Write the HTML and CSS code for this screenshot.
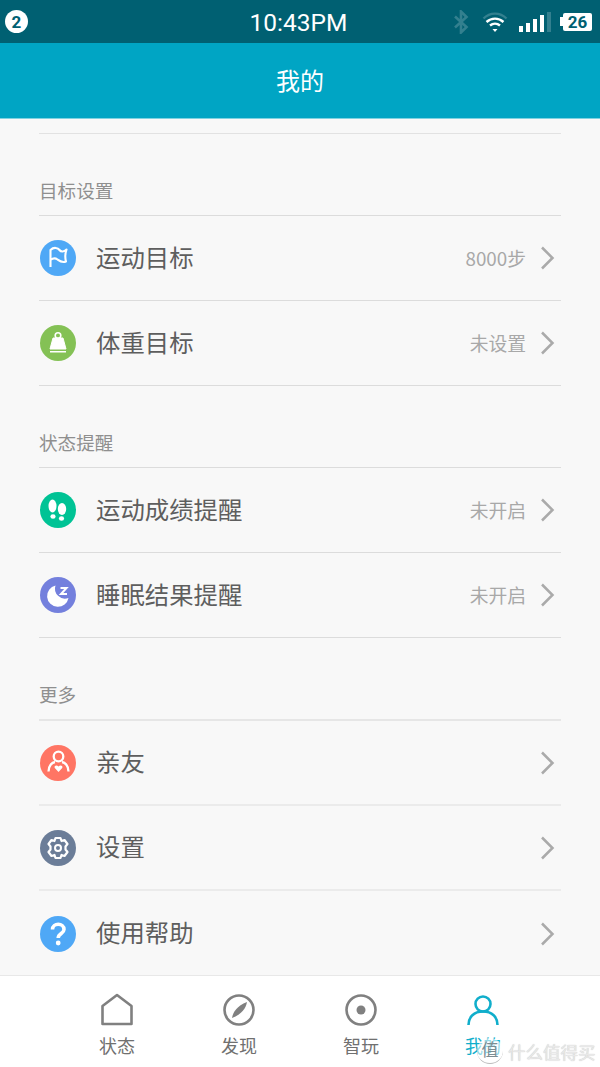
FILE: index.html
```html
<!DOCTYPE html>
<html lang="zh-CN">
<head>
  <meta charset="UTF-8" />
  <meta name="viewport" content="width=device-width, initial-scale=1.0" />
  <title>我的</title>
  <link rel="stylesheet" href="styles.css">
</head>
<body>
  <div class="phone">
    <div class="status-bar">
      <div class="status-left"><span class="sim-badge">2</span></div>
      <div class="status-time">10:43PM</div>
      <div class="status-right">
        <svg class="ic-bt" width="20" height="24" viewBox="0 0 20 24"><path d="M4 6.5 L15.5 17 L10 22.5 V1.5 L15.5 7 L4 17.5" fill="none" stroke="#33808f" stroke-width="2.6"/></svg>
        <svg class="ic-wifi" width="26" height="22" viewBox="0 0 26 22">
          <path d="M1.5 7.5 C8 1 18 1 24.5 7.5" fill="none" stroke="#33808f" stroke-width="2.4"/>
          <path d="M4.5 11 C9.5 6.5 16.5 6.5 21.5 11" fill="none" stroke="#fff" stroke-width="2.4"/>
          <path d="M8 14.5 C11 12 15 12 18 14.5" fill="none" stroke="#fff" stroke-width="2.4"/>
          <path d="M10.5 18 L15.5 18 L13 21 Z" fill="#fff"/>
        </svg>
        <svg class="ic-signal" width="32" height="22" viewBox="0 0 32 22">
          <rect x="0" y="15" width="4" height="6" fill="#fff"/>
          <rect x="7" y="12" width="4" height="9" fill="#fff"/>
          <rect x="14" y="8" width="4" height="13" fill="#fff"/>
          <rect x="21" y="4" width="4" height="17" fill="#fff"/>
          <rect x="28" y="1" width="4" height="20" fill="#33808f"/>
        </svg>
        <div class="battery"><span class="battery-cap"></span><span class="battery-level">26</span></div>
      </div>
    </div>
    <div class="title-bar"><span class="title-text">我的</span></div>

    <div class="content">
      <div class="top-line"></div>

      <div class="section-title">目标设置</div>
      <div class="row">
        <span class="row-icon blue">
          <svg width="36" height="36" viewBox="0 0 36 36"><path d="M10.5 27 V10 C14 6.5 18 8 19.5 10 C21 12 24 12 26.5 9.5 C25 14 25 18 26 21.5 C22 23 19.5 21 17.5 19.5 C15.5 18 13 18 10.5 20" fill="none" stroke="#fff" stroke-width="2.1" stroke-linejoin="round"/></svg>
        </span>
        <span class="row-label">运动目标</span>
        <span class="row-value">8000步</span>
        <svg class="chevron" width="14" height="24" viewBox="0 0 14 24"><path d="M1 1.5 L11.5 12 L1 22.5" fill="none" stroke="#aaa" stroke-width="2.5"/></svg>
      </div>
      <div class="row">
        <span class="row-icon green">
          <svg width="36" height="36" viewBox="0 0 36 36">
            <circle cx="18" cy="10.5" r="2.8" fill="none" stroke="#fff" stroke-width="1.6"/>
            <path d="M13 13 H23 L26 24 H10 Z" fill="#fff" stroke="#fff" stroke-linejoin="round"/>
            <rect x="10" y="26" width="16" height="1.5" fill="#fff"/>
          </svg>
        </span>
        <span class="row-label">体重目标</span>
        <span class="row-value">未设置</span>
        <svg class="chevron" width="14" height="24" viewBox="0 0 14 24"><path d="M1 1.5 L11.5 12 L1 22.5" fill="none" stroke="#aaa" stroke-width="2.5"/></svg>
      </div>

      <div class="section-title">状态提醒</div>
      <div class="row">
        <span class="row-icon teal">
          <svg width="36" height="36" viewBox="0 0 36 36" fill="#fff">
            <ellipse cx="12.5" cy="14" rx="4" ry="6.5"/>
            <ellipse cx="13" cy="24.5" rx="2.6" ry="2.2"/>
            <ellipse cx="22" cy="17" rx="4.2" ry="6"/>
            <ellipse cx="21.5" cy="26.5" rx="2.6" ry="2.2"/>
          </svg>
        </span>
        <span class="row-label">运动成绩提醒</span>
        <span class="row-value">未开启</span>
        <svg class="chevron" width="14" height="24" viewBox="0 0 14 24"><path d="M1 1.5 L11.5 12 L1 22.5" fill="none" stroke="#aaa" stroke-width="2.5"/></svg>
      </div>
      <div class="row">
        <span class="row-icon purple">
          <svg width="36" height="36" viewBox="0 0 36 36">
            <path d="M15.5 8.5 A10.8 10.8 0 1 0 28.5 21 A10 10 0 0 1 15.5 8.5 Z" fill="#fff"/>
            <path d="M20.5 11 H26.5 L21 17 H27" fill="none" stroke="#fff" stroke-width="2"/>
          </svg>
        </span>
        <span class="row-label">睡眠结果提醒</span>
        <span class="row-value">未开启</span>
        <svg class="chevron" width="14" height="24" viewBox="0 0 14 24"><path d="M1 1.5 L11.5 12 L1 22.5" fill="none" stroke="#aaa" stroke-width="2.5"/></svg>
      </div>

      <div class="section-title tall">更多</div>
      <div class="row soft">
        <span class="row-icon coral">
          <svg width="36" height="36" viewBox="0 0 36 36">
            <circle cx="18.5" cy="11.5" r="4.8" fill="none" stroke="#fff" stroke-width="2.3"/>
            <path d="M8.5 26.5 C8.5 20.5 12 17.5 15 17 M28.5 26.5 C28.5 20.5 25 17.5 22 17" fill="none" stroke="#fff" stroke-width="2.3"/>
            <path d="M18.5 27 L14.8 23 C13.6 21 16.6 19.4 18.5 21.6 C20.4 19.4 23.4 21 22.2 23 Z" fill="#fff"/>
          </svg>
        </span>
        <span class="row-label">亲友</span>
        <svg class="chevron" width="14" height="24" viewBox="0 0 14 24"><path d="M1 1.5 L11.5 12 L1 22.5" fill="none" stroke="#aaa" stroke-width="2.5"/></svg>
      </div>
      <div class="row soft">
        <span class="row-icon slate">
          <svg width="36" height="36" viewBox="0 0 36 36">
            <path d="M15.5 8 H20.5 L21.5 11 L24.5 10 L27.5 14 L25.5 16.5 V19.5 L27.5 22 L24.5 26 L21.5 25 L20.5 28 H15.5 L14.5 25 L11.5 26 L8.5 22 L10.5 19.5 V16.5 L8.5 14 L11.5 10 L14.5 11 Z" fill="none" stroke="#fff" stroke-width="2.2" stroke-linejoin="round"/>
            <circle cx="18" cy="18" r="3" fill="none" stroke="#fff" stroke-width="2"/>
          </svg>
        </span>
        <span class="row-label">设置</span>
        <svg class="chevron" width="14" height="24" viewBox="0 0 14 24"><path d="M1 1.5 L11.5 12 L1 22.5" fill="none" stroke="#aaa" stroke-width="2.5"/></svg>
      </div>
      <div class="row last">
        <span class="row-icon blue">
          <svg width="36" height="36" viewBox="0 0 36 36">
            <path d="M12.5 13.5 C12.5 6.5 24 6.5 24 13.5 C24 17.5 18.2 17.5 18.2 22" fill="none" stroke="#fff" stroke-width="3.6"/>
            <circle cx="18.2" cy="27" r="2.4" fill="#fff"/>
          </svg>
        </span>
        <span class="row-label">使用帮助</span>
        <svg class="chevron" width="14" height="24" viewBox="0 0 14 24"><path d="M1 1.5 L11.5 12 L1 22.5" fill="none" stroke="#aaa" stroke-width="2.5"/></svg>
      </div>
    </div>

    <div class="tab-bar">
      <div class="tab">
        <svg width="34" height="34" viewBox="0 0 34 34"><path d="M2.5 13 L17 2 L31.5 13 V31 H2.5 Z" fill="none" stroke="#808080" stroke-width="2.6" stroke-linejoin="round"/></svg>
        <span>状态</span>
      </div>
      <div class="tab">
        <svg width="34" height="34" viewBox="0 0 34 34">
          <circle cx="17" cy="17" r="14.5" fill="none" stroke="#808080" stroke-width="2.6"/>
          <path d="M25 9 C24 15 20 21 10 25 C11 19 15 13 25 9 Z" fill="#808080"/>
        </svg>
        <span>发现</span>
      </div>
      <div class="tab">
        <svg width="34" height="34" viewBox="0 0 34 34">
          <circle cx="17" cy="17" r="14.5" fill="none" stroke="#808080" stroke-width="2.6"/>
          <circle cx="17" cy="17" r="4.5" fill="#808080"/>
        </svg>
        <span>智玩</span>
      </div>
      <div class="tab active">
        <svg width="34" height="34" viewBox="0 0 34 34">
          <circle cx="17" cy="11" r="7.5" fill="none" stroke="#10aecb" stroke-width="2.6"/>
          <path d="M2.5 32 C2.5 24 8 18.5 17 18.5 C26 18.5 31.5 24 31.5 32" fill="none" stroke="#10aecb" stroke-width="2.6"/>
        </svg>
        <span>我的</span>
      </div>
    </div>

    <div class="watermark"><span class="watermark-badge">值</span><span>什么值得买</span></div>
  </div>
</body>
</html>
```

FILE: styles.css
```css
* {
  box-sizing: border-box;
}
body {
  margin: 0;
  font-family: "Noto Sans CJK SC", "Noto Sans", sans-serif;
  background: #f8f8f8;
}
.phone {
  position: relative;
  width: 600px;
  height: 1067px;
  display: flex;
  flex-direction: column;
  overflow: hidden;
}

/* status bar */
.status-bar {
  height: 43px;
  background: #006072;
  color: #fff;
  display: grid;
  grid-template-columns: 1fr auto 1fr;
  align-items: center;
  padding: 0 8px 0 5px;
}
.sim-badge {
  display: flex;
  align-items: center;
  justify-content: center;
  width: 23px;
  height: 23px;
  border-radius: 50%;
  background: #fff;
  color: #006072;
  font-family: Roboto, sans-serif;
  font-size: 17px;
  font-weight: 700;
}
.status-time {
  font-family: Roboto, sans-serif;
  font-size: 24.5px;
  padding-top: 2px;
}
.status-right {
  display: flex;
  justify-content: flex-end;
  align-items: center;
}
.ic-wifi {
  margin-left: 11px;
}
.ic-signal {
  margin-left: 11px;
}
.battery {
  display: flex;
  align-items: center;
  margin-left: 9px;
}
.battery-cap {
  width: 3px;
  height: 9px;
  background: #fff;
}
.battery-level {
  width: 29px;
  height: 18px;
  background: #fff;
  border-radius: 2px;
  color: #006072;
  font-family: Roboto, sans-serif;
  font-size: 17px;
  font-weight: 700;
  line-height: 18px;
  text-align: center;
}

/* title */
.title-bar {
  height: 76px;
  background: #00a5c4;
  border-bottom: 1px solid #7fd2e1;
  color: #fff;
  font-size: 24px;
  display: flex;
  align-items: center;
  justify-content: center;
}
.title-text {
  padding-bottom: 2px;
}

/* list */
.content {
  flex: 1;
  padding: 0 39px;
  min-height: 0;
}
.top-line {
  height: 1px;
  margin-top: 14px;
  background: #e2e2e2;
}
.section-title {
  height: 82px;
  padding-bottom: 12px;
  border-bottom: 1px solid #dcdcdc;
  color: #8f8f8f;
  font-size: 18.6px;
  display: flex;
  align-items: flex-end;
}
.section-title.tall {
  height: 83px;
  border-bottom: 2px solid #e6e6e6;
}
.row {
  height: 85px;
  border-bottom: 1px solid #dcdcdc;
  display: flex;
  align-items: center;
  padding: 0 6px 0 1px;
}
.row.soft {
  border-bottom: 2px solid #ebebeb;
}
.row.last {
  border-bottom: none;
}
.row-icon {
  width: 36px;
  height: 36px;
  border-radius: 50%;
  display: block;
  flex-shrink: 0;
}
.row-icon svg {
  display: block;
}
.blue { background: #4fa8f6; }
.green { background: #84c155; }
.teal { background: #00c395; }
.purple { background: #7480dd; }
.coral { background: #ff7564; }
.slate { background: #6b7d98; }
.row-label {
  margin-left: 20px;
  padding-bottom: 4px;
  font-size: 24.4px;
  color: #5e5e5e;
  flex: 1;
}
.row-value {
  padding-bottom: 2px;
  font-size: 18.8px;
  color: #a8a8a8;
  margin-right: 15px;
}

/* bottom tabs */
.tab-bar {
  height: 92px;
  background: #fff;
  border-top: 1px solid #e8e8e8;
  padding: 17px 56px 0;
  display: grid;
  grid-template-columns: repeat(4, 1fr);
}
.tab {
  display: flex;
  flex-direction: column;
  align-items: center;
  color: #707070;
  font-size: 18px;
  line-height: 26px;
}
.tab svg {
  margin-bottom: 5px;
}
.tab.active {
  color: #10aecb;
}

/* image watermark over the corner */
.watermark {
  position: absolute;
  left: 477px;
  bottom: 3px;
  display: flex;
  align-items: center;
  gap: 5px;
  font-size: 17.5px;
  color: #e8e8e8;
  text-shadow: 0 0 1px #bbb;
}
.watermark-badge {
  width: 26px;
  height: 26px;
  padding-bottom: 4px;
  border-radius: 50%;
  border-bottom: 1px solid #bbb;
  background: rgba(255, 255, 255, 0.55);
  display: flex;
  align-items: center;
  justify-content: center;
  color: #7c8d92;
  font-size: 17px;
  text-shadow: none;
}
```
